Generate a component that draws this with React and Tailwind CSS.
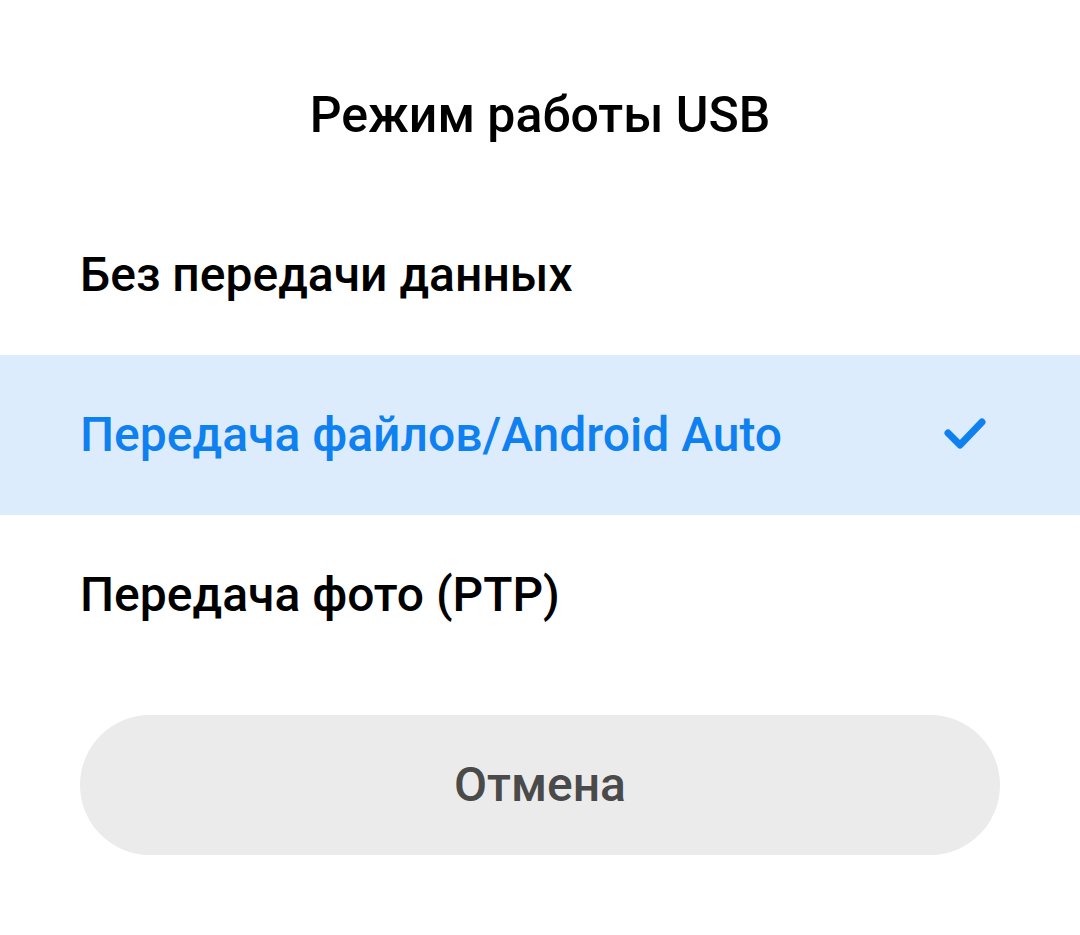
import React, { useState } from "react";

const options = [
  "Без передачи данных",
  "Передача файлов/Android Auto",
  "Передача фото (PTP)",
];

const App = () => {
  const [selected, setSelected] = useState(1);

  return (
    <div
      className="w-[1080px] h-[935px] bg-white"
      style={{ fontFamily: "Roboto, 'Noto Sans', sans-serif" }}
    >
      <div className="h-[195px] pt-[85px]">
        <h2 className="text-center text-[50px] leading-[60px] font-medium text-black">
          Режим работы USB
        </h2>
      </div>
      <div>
        {options.map((opt, i) => (
          <div
            key={opt}
            onClick={() => setSelected(i)}
            className={`h-[160px] flex items-center justify-between pl-[80px] pr-[93px] ${
              selected === i ? "bg-[#ddecfc]" : "bg-white"
            }`}
          >
            <span
              className={`text-[48px] leading-[60px] font-medium ${
                selected === i ? "text-[#0f80f0]" : "text-black"
              }`}
            >
              {opt}
            </span>
            {selected === i && (
              <svg width="44" height="36" viewBox="0 0 44 36" fill="none">
                <path
                  d="M5 16 L17 28 L39 5"
                  stroke="#0f80f0"
                  strokeWidth="7"
                  strokeLinecap="round"
                  strokeLinejoin="round"
                />
              </svg>
            )}
          </div>
        ))}
      </div>
      <div className="mt-[40px] mx-[80px]">
        <button className="w-full h-[140px] rounded-full bg-[#ebebeb] text-[#4a4a4a] text-[48px] font-medium">
          Отмена
        </button>
      </div>
    </div>
  );
};

export default App;
